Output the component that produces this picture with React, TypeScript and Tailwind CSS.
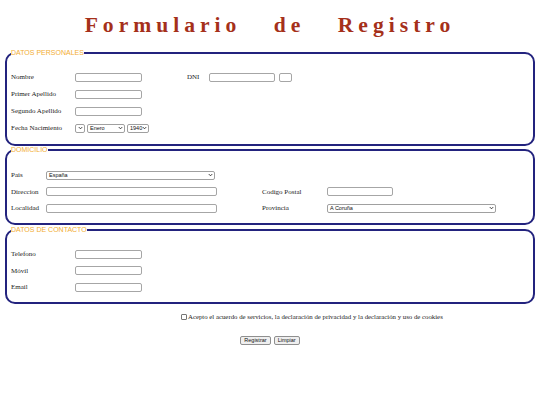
import React from "react";

const serif = "font-['Liberation_Serif','Times_New_Roman',serif]";

function Chevron() {
  return (
    <svg width="5" height="4" viewBox="0 0 5 4" className="shrink-0">
      <path d="M0.8 1.1 L2.5 2.8 L4.2 1.1" fill="none" stroke="#222" strokeWidth="0.9" />
    </svg>
  );
}

function Sel({ cls, value }: { cls: string; value: string }) {
  return (
    <div
      role="combobox"
      className={`flex h-[9px] shrink-0 items-center justify-between rounded-[2px] border border-[#a0a0a0] bg-white pl-[2px] pr-[1px] font-['Liberation_Sans',Arial,sans-serif] text-[5.5px] leading-[7px] text-[#111] ${cls}`}
    >
      <span className="whitespace-nowrap">{value}</span>
      <Chevron />
    </div>
  );
}

function Inp({ cls }: { cls: string }) {
  return (
    <input
      type="text"
      className={`h-[9px] shrink-0 rounded-[2px] border border-[#a6a6a6] bg-white outline-none ${cls}`}
    />
  );
}

function Legend({ children }: { children: React.ReactNode }) {
  return (
    <legend className="font-['Liberation_Sans',Arial,sans-serif] text-[7px] leading-[8px] text-[#f2ad33]">
      {children}
    </legend>
  );
}

function Label({ cls, children }: { cls: string; children: React.ReactNode }) {
  return <span className={`shrink-0 text-[7px] leading-[8px] text-[#222] ${cls}`}>{children}</span>;
}

export default function App() {
  return (
    <div className={`w-[540px] h-[405px] bg-white ${serif}`}>
      <h1 className="pt-[13px] text-center text-[21.6px] font-bold leading-[25px] tracking-[5px] text-[#a5301a] [word-spacing:22px]">
        Formulario de Registro
      </h1>

      <div className="mt-[11px] flex flex-col">
        <fieldset className="mx-[5px] rounded-[10px] border-2 border-[#23237e] pl-[4px] pt-[15px] pb-[11px]">
          <Legend>DATOS PERSONALES</Legend>
          <div className="flex flex-col gap-y-[7px]">
            <div className="flex h-[10px] items-center">
              <Label cls="w-[64px]">Nombre</Label>
              <Inp cls="w-[67px]" />
              <Label cls="ml-[45px] w-[22px]">DNI</Label>
              <Inp cls="w-[66px]" />
              <Inp cls="ml-[4px] w-[13px]" />
            </div>
            <div className="flex h-[10px] items-center">
              <Label cls="w-[64px]">Primer Apellido</Label>
              <Inp cls="w-[67px]" />
            </div>
            <div className="flex h-[10px] items-center">
              <Label cls="w-[64px]">Segundo Apellido</Label>
              <Inp cls="w-[67px]" />
            </div>
            <div className="flex h-[10px] items-center">
              <Label cls="w-[64px]">Fecha Nacimiento</Label>
              <Sel cls="w-[10px] justify-end" value="" />
              <Sel cls="ml-[2px] w-[38px]" value="Enero" />
              <Sel cls="ml-[2px] w-[22px]" value="1940" />
            </div>
          </div>
        </fieldset>

        <fieldset className="mx-[5px] rounded-[10px] border-2 border-[#23237e] pl-[4px] pt-[16px] pb-[10px]">
          <Legend>DOMICILIO</Legend>
          <div className="flex flex-col gap-y-[6.5px]">
            <div className="flex h-[10px] items-center">
              <Label cls="w-[35px]">Pais</Label>
              <Sel cls="w-[169px]" value="España" />
            </div>
            <div className="flex h-[10px] items-center">
              <Label cls="w-[35px]">Direccion</Label>
              <Inp cls="w-[171px]" />
              <Label cls="ml-[45px] w-[65px]">Codigo Postal</Label>
              <Inp cls="w-[66px]" />
            </div>
            <div className="flex h-[10px] items-center">
              <Label cls="w-[35px]">Localidad</Label>
              <Inp cls="w-[171px]" />
              <Label cls="ml-[45px] w-[65px]">Provincia</Label>
              <Sel cls="w-[169px]" value="A Coruña" />
            </div>
          </div>
        </fieldset>

        <fieldset className="mx-[5px] mt-[1px] rounded-[10px] border-2 border-[#23237e] pl-[4px] pt-[15px] pb-[10px]">
          <Legend>DATOS DE CONTACTO</Legend>
          <div className="flex flex-col gap-y-[6.5px]">
            <div className="flex h-[10px] items-center">
              <Label cls="w-[64px]">Telefono</Label>
              <Inp cls="w-[67px]" />
            </div>
            <div className="flex h-[10px] items-center">
              <Label cls="w-[64px]">Móvil</Label>
              <Inp cls="w-[67px]" />
            </div>
            <div className="flex h-[10px] items-center">
              <Label cls="w-[64px]">Email</Label>
              <Inp cls="w-[67px]" />
            </div>
          </div>
        </fieldset>
      </div>

      <div className="mt-[9px] flex items-center pl-[181px]">
        <input
          type="checkbox"
          className="h-[6px] w-[6px] shrink-0 appearance-none rounded-[1px] border border-[#767676] bg-white"
        />
        <span className="ml-[1px] text-[6.8px] leading-[8px] text-[#222]">
          Acepto el acuerdo de servicios, la declaración de privacidad y la declaración y uso de cookies
        </span>
      </div>

      <div className="mt-[15px] flex items-center justify-center gap-[3px]">
        <button className="h-[9px] rounded-[2px] border border-[#8f8f8f] bg-[#efefef] px-[3px] font-['Liberation_Sans',Arial,sans-serif] text-[5.5px] leading-[7px] text-[#111]">
          Registrar
        </button>
        <button className="h-[9px] rounded-[2px] border border-[#8f8f8f] bg-[#efefef] px-[3px] font-['Liberation_Sans',Arial,sans-serif] text-[5.5px] leading-[7px] text-[#111]">
          Limpiar
        </button>
      </div>
    </div>
  );
}
